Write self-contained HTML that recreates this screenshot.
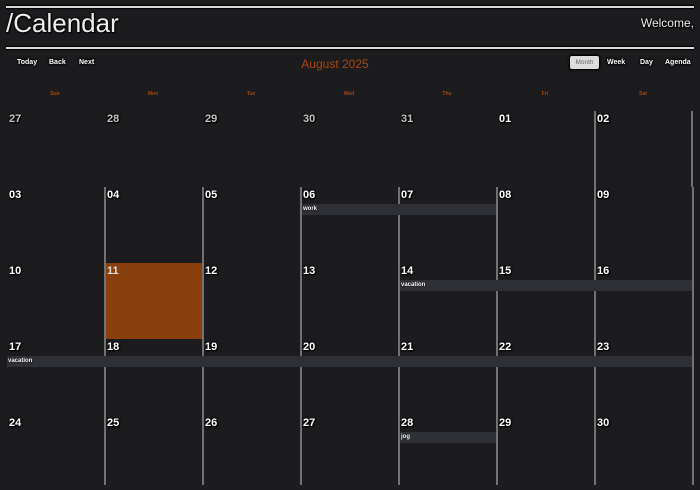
<!DOCTYPE html>
<html><head><meta charset="utf-8"><style>
*{margin:0;padding:0;box-sizing:border-box}
body{width:700px;height:490px;background:#1c1b1e;font-family:"Liberation Sans",sans-serif;position:relative;overflow:hidden;color:#fff}
.a{position:absolute}
.hr{position:absolute;left:6px;width:688px;height:2px;background:#d8d8d8;box-shadow:0 1px 1px #000,0 -1px 1px #000}
.sh{text-shadow:0 0 2px #000,0 0 2px #000,1px 1px 1px #000}
.btn{position:absolute;top:59px;font-size:7px;font-weight:bold;color:#fff;text-shadow:0 0 2px #000,0 0 2px #000,0 0 2px #000}
.dh{position:absolute;top:91px;width:98px;text-align:center;font-size:5px;font-weight:bold;color:#a4480f}
.n{position:absolute;font-size:11px;font-weight:bold;color:#fff;text-shadow:0 0 2px #000,0 0 2px #000,1px 1px 1px #000}
.g{color:#c2c2c2}
.v{position:absolute;width:2px;background:#727275}
.ev{position:absolute;height:11px;background:#2e3035;font-size:6px;font-weight:bold;line-height:11px;padding-left:1px;color:#fff;text-shadow:0 0 1px #000,0 0 1px #000}
</style></head><body>
<div class="hr" style="top:6px"></div>
<div class="a sh" style="left:6px;top:8px;font-size:26px;color:#eee">/Calendar</div>
<div class="a sh" style="right:6px;top:16px;font-size:12px;color:#eee">Welcome,</div>
<div class="hr" style="top:47px"></div>

<div class="btn" style="left:17px">Today</div>
<div class="btn" style="left:49px">Back</div>
<div class="btn" style="left:79px">Next</div>
<div class="a" style="left:270px;width:130px;text-align:center;top:57px;font-size:12px;color:#a4480f">August 2025</div>
<div class="a" style="left:569px;top:55px;width:31px;height:15px;background:#dcdcdc;border:1px solid #000;border-radius:3px;box-shadow:0 0 2px #000;font-size:6.5px;color:#666;text-align:center;line-height:13px">Month</div>
<div class="btn" style="left:607px">Week</div>
<div class="btn" style="left:640px">Day</div>
<div class="btn" style="left:665px">Agenda</div>

<div class="dh" style="left:6px">Sun</div>
<div class="dh" style="left:104px">Mon</div>
<div class="dh" style="left:202px">Tue</div>
<div class="dh" style="left:300px">Wed</div>
<div class="dh" style="left:398px">Thu</div>
<div class="dh" style="left:496px">Fri</div>
<div class="dh" style="left:594px">Sat</div>

<div class="a" style="left:105px;top:263px;width:97px;height:76px;background:#8a3f0c"></div>

<div class="v" style="left:594px;top:111px;height:76px"></div>
<div class="v" style="left:691px;top:111px;height:76px"></div>
<div class="v" style="left:104px;top:187px;height:298px"></div>
<div class="v" style="left:202px;top:187px;height:298px"></div>
<div class="v" style="left:300px;top:187px;height:298px"></div>
<div class="v" style="left:398px;top:187px;height:298px"></div>
<div class="v" style="left:496px;top:187px;height:298px"></div>
<div class="v" style="left:594px;top:187px;height:298px"></div>
<div class="v" style="left:692px;top:187px;height:298px"></div>

<div class="ev" style="left:302px;top:204px;width:194px">work</div>
<div class="ev" style="left:400px;top:280px;width:292px">vacation</div>
<div class="ev" style="left:7px;top:356px;width:685px">vacation</div>
<div class="ev" style="left:400px;top:432px;width:96px">jog</div>

<div class="n g" style="left:9px;top:113px">27</div>
<div class="n g" style="left:107px;top:113px">28</div>
<div class="n g" style="left:205px;top:113px">29</div>
<div class="n g" style="left:303px;top:113px">30</div>
<div class="n g" style="left:401px;top:113px">31</div>
<div class="n" style="left:499px;top:113px">01</div>
<div class="n" style="left:597px;top:113px">02</div>
<div class="n" style="left:9px;top:189px">03</div>
<div class="n" style="left:107px;top:189px">04</div>
<div class="n" style="left:205px;top:189px">05</div>
<div class="n" style="left:303px;top:189px">06</div>
<div class="n" style="left:401px;top:189px">07</div>
<div class="n" style="left:499px;top:189px">08</div>
<div class="n" style="left:597px;top:189px">09</div>
<div class="n" style="left:9px;top:265px">10</div>
<div class="n" style="left:107px;top:265px;color:#ddd;text-shadow:none">11</div>
<div class="n" style="left:205px;top:265px">12</div>
<div class="n" style="left:303px;top:265px">13</div>
<div class="n" style="left:401px;top:265px">14</div>
<div class="n" style="left:499px;top:265px">15</div>
<div class="n" style="left:597px;top:265px">16</div>
<div class="n" style="left:9px;top:341px">17</div>
<div class="n" style="left:107px;top:341px">18</div>
<div class="n" style="left:205px;top:341px">19</div>
<div class="n" style="left:303px;top:341px">20</div>
<div class="n" style="left:401px;top:341px">21</div>
<div class="n" style="left:499px;top:341px">22</div>
<div class="n" style="left:597px;top:341px">23</div>
<div class="n" style="left:9px;top:417px">24</div>
<div class="n" style="left:107px;top:417px">25</div>
<div class="n" style="left:205px;top:417px">26</div>
<div class="n" style="left:303px;top:417px">27</div>
<div class="n" style="left:401px;top:417px">28</div>
<div class="n" style="left:499px;top:417px">29</div>
<div class="n" style="left:597px;top:417px">30</div>
</body></html>
